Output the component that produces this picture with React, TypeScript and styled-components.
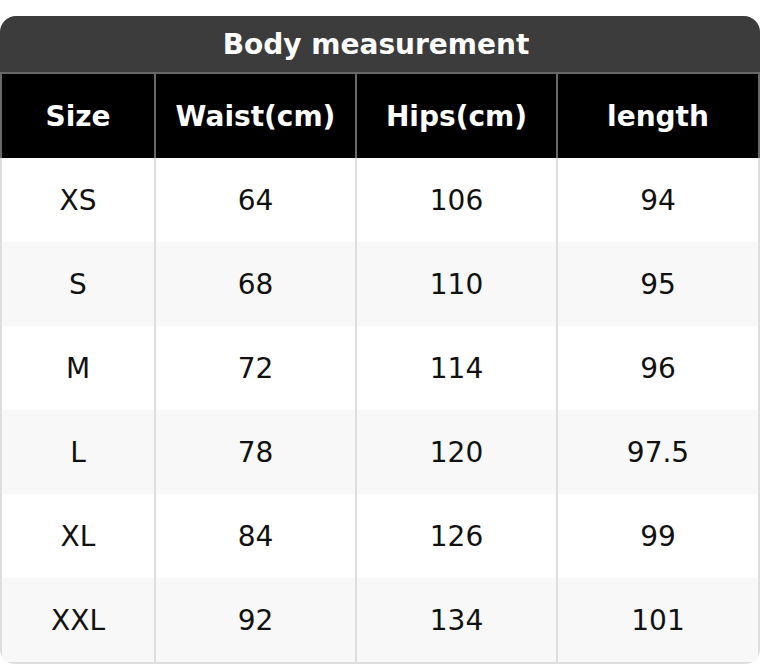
import * as React from "react";
import styled, { createGlobalStyle } from "styled-components";

const GlobalStyle = createGlobalStyle`
  body {
    margin: 0;
    background: #ffffff;
    font-family: "DejaVu Sans", "Liberation Sans", sans-serif;
  }
`;

const Page = styled.div`
  padding-top: 16px;
  width: 760px;
`;

const Card = styled.div`
  border-radius: 16px 16px 14px 14px;
  overflow: hidden;
`;

const Title = styled.div`
  height: 56px;
  padding-right: 8px;
  background-color: #3c3c3c;
  color: #ffffff;
  font-weight: bold;
  font-size: 28px;
  display: flex;
  align-items: center;
  justify-content: center;
`;

// grid lines come from the grid background showing through the gaps
const Grid = styled.div<{ $line: string }>`
  display: grid;
  grid-template-columns: 152px 199px 199px 1fr;
  column-gap: 2px;
  background-color: ${(p) => p.$line};
  padding: 0 2px;
`;

const HeadGrid = styled(Grid)`
  padding-top: 2px;
`;

const BodyGrid = styled(Grid)`
  padding-bottom: 2px;
  border-radius: 0 0 14px 14px;
`;

const HeadCell = styled.div`
  height: 84px;
  background-color: #000000;
  color: #ffffff;
  font-weight: bold;
  font-size: 28px;
  display: flex;
  align-items: center;
  justify-content: center;
`;

const Cell = styled.div<{ $alt?: boolean }>`
  height: 84px;
  background-color: ${(p) => (p.$alt ? "#f8f8f8" : "#ffffff")};
  color: #111111;
  font-size: 28px;
  display: flex;
  align-items: center;
  justify-content: center;
`;

const headers = ["Size", "Waist(cm)", "Hips(cm)", "length"];

const rows = [
  ["XS", "64", "106", "94"],
  ["S", "68", "110", "95"],
  ["M", "72", "114", "96"],
  ["L", "78", "120", "97.5"],
  ["XL", "84", "126", "99"],
  ["XXL", "92", "134", "101"],
];

export default function App() {
  return (
    <Page>
      <GlobalStyle />
      <Card>
        <Title>Body measurement</Title>
        <HeadGrid $line="#686868">
          {headers.map((h) => (
            <HeadCell key={h}>{h}</HeadCell>
          ))}
        </HeadGrid>
        <BodyGrid $line="#dedede">
          {rows.map((r, ri) =>
            r.map((v, ci) => (
              <Cell key={ri + "-" + ci} $alt={ri % 2 === 1}>
                {v}
              </Cell>
            ))
          )}
        </BodyGrid>
      </Card>
    </Page>
  );
}
